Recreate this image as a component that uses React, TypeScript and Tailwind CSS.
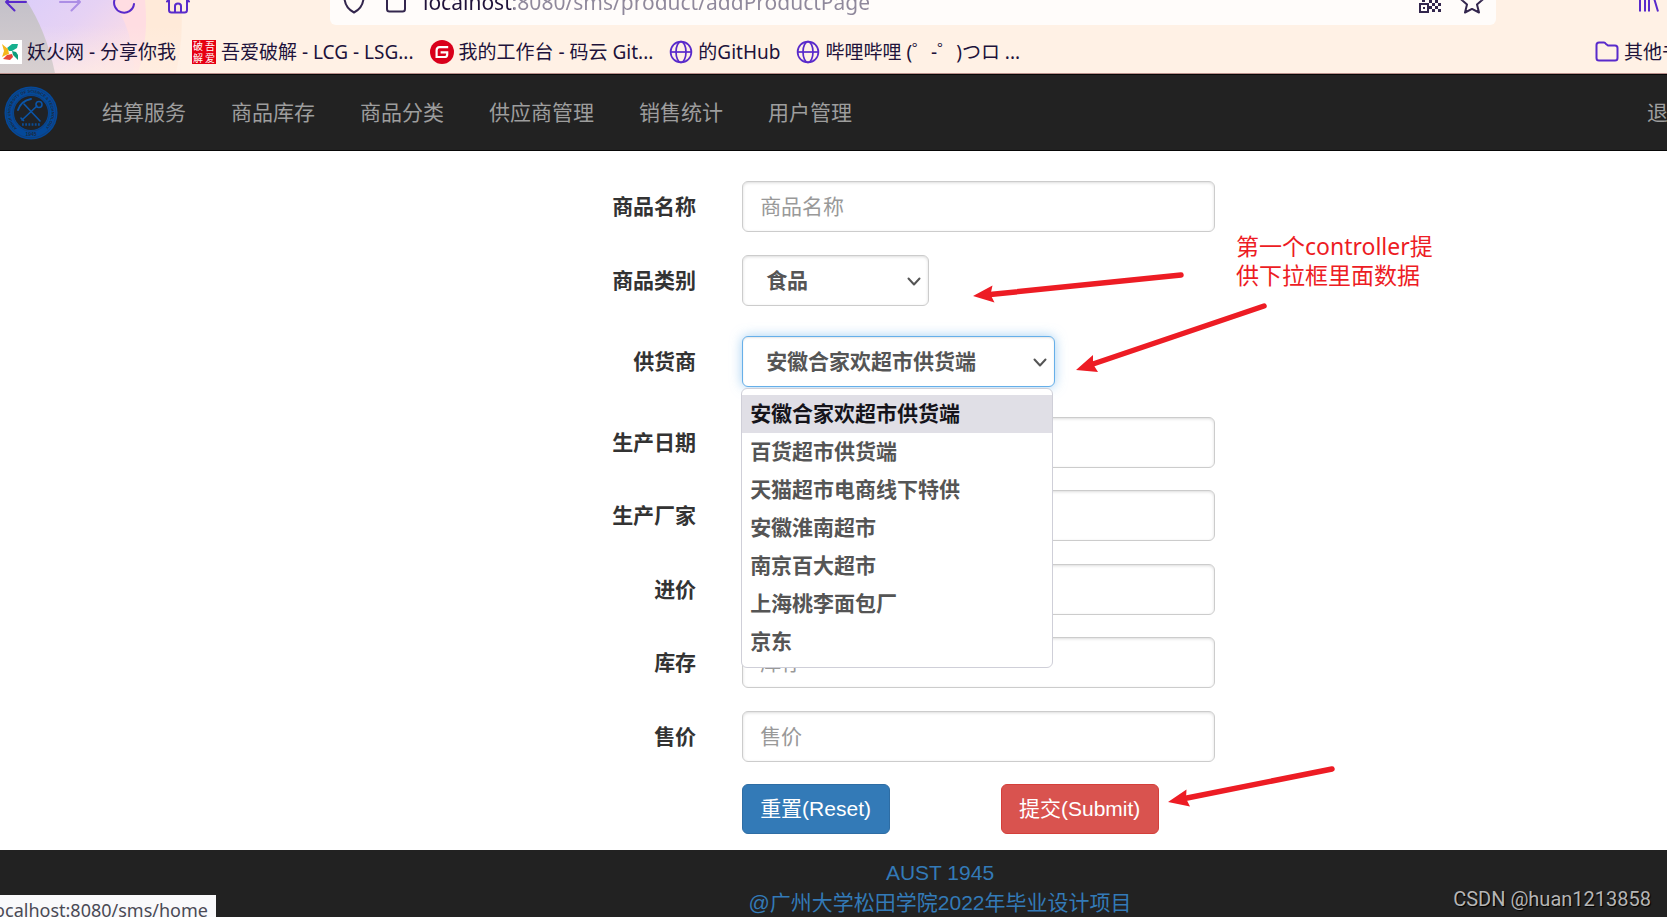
import { useState } from "react";

const navItems = ["结算服务", "商品库存", "商品分类", "供应商管理", "销售统计", "用户管理"];

const suppliers = [
  "安徽合家欢超市供货端",
  "百货超市供货端",
  "天猫超市电商线下特供",
  "安徽淮南超市",
  "南京百大超市",
  "上海桃李面包厂",
  "京东",
];

const uiFont = "font-['Noto_Sans','Noto_Sans_CJK_SC',sans-serif]";
const pageFont = "font-['Liberation_Sans','Noto_Sans_CJK_SC',sans-serif]";
const controlClass =
  "h-[51px] rounded-md border bg-white text-[21px] outline-none";

function ThemeBackground() {
  return (
    <svg className="absolute left-0 top-0 h-[73px] w-[220px]" viewBox="0 0 220 73" aria-hidden="true">
      <defs>
        <linearGradient id="lav" x1="0" y1="0" x2="1" y2="0.6">
          <stop offset="0" stopColor="#d9cdfb" />
          <stop offset="0.55" stopColor="#e6d2f4" />
          <stop offset="1" stopColor="#fbdde6" />
        </linearGradient>
        <linearGradient id="fade" x1="0" y1="0" x2="0" y2="1">
          <stop offset="0.35" stopColor="#fff0e5" stopOpacity="0" />
          <stop offset="1" stopColor="#fff0e5" stopOpacity="0.6" />
        </linearGradient>
        <linearGradient id="gray" x1="0" y1="0" x2="0" y2="1">
          <stop offset="0" stopColor="#c3c0c9" />
          <stop offset="1" stopColor="#d8d0d0" />
        </linearGradient>
      </defs>
      <path d="M0 0H181Q184 40 176 73H0Z" fill="#ffead9" />
      <path d="M0 0H145Q149 38 138 73H0Z" fill="#ffdde2" />
      <path d="M0 0H112Q134 30 134 73H0Z" fill="url(#lav)" />
      <path d="M0 0H181V73H0Z" fill="url(#fade)" />
      <path d="M0 0H26Q46 30 55 73H0Z" fill="url(#gray)" />
    </svg>
  );
}

function GlobeIcon() {
  return (
    <svg className="size-6 shrink-0" viewBox="0 0 24 24" fill="none" stroke="#592acb" strokeWidth="1.7">
      <circle cx="12" cy="12" r="10.4" />
      <ellipse cx="12" cy="12" rx="5" ry="10.4" />
      <path d="M1.6 12h20.8" />
    </svg>
  );
}

function PinwheelIcon() {
  return (
    <svg className="h-6 w-[22px] shrink-0" viewBox="0 0 22 24">
      <path d="M0 0h22v24H0z" fill="#fff" />
      <path d="M7 8L12 4h6l-1 4-5 3-3 0z" fill="#16b08e" />
      <path d="M12 11l4 1 2 3v5l-5-5z" fill="#0f9d7c" />
      <path d="M3 19l4-4 5-1 1 3-3 3z" fill="#e8473a" />
      <path d="M2 4l6 5 1 5-3 1-4 2 2-6z" fill="#f5b71c" />
    </svg>
  );
}

function SealIcon() {
  return (
    <span className="grid size-6 shrink-0 grid-cols-2 place-items-center bg-[#e60012] text-[10px] leading-[12px] text-white">
      <span>破</span>
      <span>吾</span>
      <span>解</span>
      <span>爱</span>
    </span>
  );
}

function GiteeIcon() {
  return (
    <svg className="size-6 shrink-0" viewBox="0 0 24 24" fill="none">
      <circle cx="12" cy="12" r="12" fill="#d9001b" />
      <path
        d="M18.2 7.2H9.6Q6.6 7.2 6.6 10.2V17H14.6Q17.2 17 17.2 14.4V12.3H10.6"
        stroke="#fff"
        strokeWidth="2.2"
      />
    </svg>
  );
}

function BookmarkLink({ icon, text }: { icon: React.ReactNode; text: string }) {
  return (
    <a href="#" className="flex items-center gap-[5px] whitespace-nowrap">
      {icon}
      <span>{text}</span>
    </a>
  );
}

function BrowserBar() {
  return (
    <header className={`relative h-[74px] overflow-hidden border-b border-[#b98f8b] bg-[#fff1e5] text-[#20123a] ${uiFont}`}>
      <ThemeBackground />
      {/* toolbar is cut off by the top of the window */}
      <div className="relative -mt-[21px] flex h-[46px] items-center">
        <div className="flex w-[330px] shrink-0 gap-[30px] pl-1">
          <button aria-label="后退">
            <svg className="size-6" viewBox="0 0 24 24" fill="none" stroke="#592acb" strokeWidth="2" strokeLinecap="round" strokeLinejoin="round">
              <path d="M22 12H2M10.500 3.500L2 12l8.500 8.500" />
            </svg>
          </button>
          <button aria-label="前进">
            <svg className="size-6" viewBox="0 0 24 24" fill="none" stroke="#ac8ee5" strokeWidth="2" strokeLinecap="round" strokeLinejoin="round">
              <path d="M2 12h20M13.500 3.500L22 12l-8.500 8.500" />
            </svg>
          </button>
          <button aria-label="刷新">
            <svg className="size-6" viewBox="0 0 24 24" fill="none" stroke="#592acb" strokeWidth="2" strokeLinecap="round">
              <path d="M3 8.500A10 10 0 1 0 22 14M20 2v6h-6" />
            </svg>
          </button>
          <button aria-label="主页">
            <svg className="size-6" viewBox="0 0 24 24" fill="none" stroke="#592acb" strokeWidth="2" strokeLinecap="round" strokeLinejoin="round">
              <path d="M1 11.500L12 1l11 10.500M3 10v10q0 2.500 2.500 2.500h13q2.500 0 2.500-2.500V10M9 22v-6q0-2.500 3-2.500t3 2.500v6" />
            </svg>
          </button>
        </div>
        <div className="flex h-full flex-1 items-center rounded-md bg-[#fffcfa] pl-3">
          <svg className="size-6" viewBox="0 0 24 24" fill="none" stroke="#33264d" strokeWidth="2" strokeLinejoin="round">
            <path d="M12 1l9.500 3.500Q22.500 17 12 22.500 1.500 17 2.500 4.500z" />
          </svg>
          <svg className="ml-[18px] size-6" viewBox="0 0 24 24" fill="none" stroke="#33264d" strokeWidth="2" strokeLinejoin="round">
            <path d="M5 1h9l7 7v11q0 2.500-2.500 2.500h-13Q3 21.500 3 19V3.500Q3 1 5.500 1z" />
          </svg>
          {/* the host name is darker than the rest of the address */}
          <input
            aria-label="地址栏"
            type="text"
            defaultValue="localhost:8080/sms/product/addProductPage"
            className="mr-4 ml-[15px] h-9 flex-1 bg-[linear-gradient(90deg,#20123a_91px,#8f889b_91px)] bg-clip-text text-[21px] text-transparent outline-none"
          />
          <svg className="size-6" viewBox="0 0 24 24" fill="#33264d">
            <path d="M1 13h10v10H1zM3 15v6h6v-6z" fillRule="evenodd" />
            <path d="M5 17h2v2H5zM4 9h3v3H4zM11 10h3v3h-3zM17 10h3v3h-3zM14 13h3v3h-3zM20 13h3v3h-3zM11 16h3v3h-3zM17 16h3v3h-3zM14 19h3v3h-3zM20 19h3v3h-3z" />
          </svg>
          <svg className="mr-3 ml-[18px] size-6" viewBox="0 0 24 24" fill="none" stroke="#33264d" strokeWidth="2" strokeLinejoin="round">
            <path d="M12 1.500l3 7 8 .8-6 5.200 2 8-7-3.600-7 3.600 2-8-6-5.200 8-.8z" />
          </svg>
        </div>
        <button aria-label="书库" className="mr-[6px] ml-[141px]">
          <svg className="size-6" viewBox="0 0 24 24" fill="none" stroke="#592acb" strokeWidth="2">
            <path d="M3 2v19.500M8 2v19.500M12 2v19.500M15.500 3L21 21.500" />
          </svg>
        </button>
      </div>
      <div className="relative flex h-[54px] items-center gap-4 text-[19px]">
        <BookmarkLink icon={<PinwheelIcon />} text="妖火网 - 分享你我" />
        <BookmarkLink icon={<SealIcon />} text="吾爱破解 - LCG - LSG..." />
        <BookmarkLink icon={<GiteeIcon />} text="我的工作台 - 码云 Git..." />
        <BookmarkLink icon={<GlobeIcon />} text="的GitHub" />
        <BookmarkLink icon={<GlobeIcon />} text="哔哩哔哩 (゜-゜)つロ ..." />
        <a href="#" className="-mr-[33px] ml-auto flex items-center gap-[5px] whitespace-nowrap">
          <svg className="size-6" viewBox="0 0 24 24" fill="none" stroke="#592acb" strokeWidth="2" strokeLinejoin="round">
            <path d="M4 2.500h5q1 0 2 1.500l2 1.500h7q2.500 0 2.500 2.500v10q0 2.500-2.500 2.500H4Q1.500 20.500 1.500 18V5Q1.500 2.500 4 2.500z" />
          </svg>
          其他书签
        </a>
      </div>
    </header>
  );
}

function SchoolLogo() {
  return (
    <svg className="size-[54px]" viewBox="0 0 54 54" fill="none" role="img" aria-label="AUST">
      <defs>
        <path id="ring" d="M13.200 42.300A20.500 20.500 0 1 1 40.800 42.300" />
      </defs>
      <circle cx="27" cy="27" r="26.500" fill="#04499a" />
      <circle cx="27" cy="27" r="24.800" stroke="#17396a" strokeWidth="0.6" />
      <circle cx="27" cy="27" r="17" fill="#202226" />
      <circle cx="27" cy="27" r="18.200" stroke="#17396a" strokeWidth="0.6" />
      <text className="font-['Liberation_Sans',sans-serif] text-[4px] font-bold" fill="#1c2a40">
        <textPath href="#ring" startOffset="0">
          ANHUI UNIVERSITY OF SCIENCE &amp; TECHNOLOGY
        </textPath>
      </text>
      <text x="27" y="50" textAnchor="middle" className="font-['Liberation_Sans',sans-serif] text-[5px] font-bold" fill="#1c2a40">
        1945
      </text>
      <g stroke="#0b55a8" strokeWidth="1.600" strokeLinecap="round">
        <path d="M20 18L36 35M33 20L18 34" />
        <path d="M14 24Q17 15 27 13" strokeWidth="1.900" />
        <circle cx="35" cy="18.500" r="3" />
        <path d="M17 32l2.500 2.500" />
      </g>
      <path d="M18 38.500h18" stroke="#0b4c94" strokeWidth="2.400" strokeDasharray="1.800 1.400" />
    </svg>
  );
}

function Navbar() {
  return (
    <nav className={`flex h-[77px] items-center overflow-hidden border-y border-[#080808] bg-[#222] text-[21px] whitespace-nowrap text-[#9d9d9d] ${pageFont}`}>
      <a href="#" className="ml-1 shrink-0">
        <SchoolLogo />
      </a>
      <div className="ml-[44px] flex gap-[45px]">
        {navItems.map((item) => (
          <a key={item} href="#">
            {item}
          </a>
        ))}
      </div>
      <a href="#" className="-mr-[22px] ml-auto">
        退出
      </a>
    </nav>
  );
}

function Chevron() {
  return (
    <svg
      className="pointer-events-none absolute top-5 right-2 h-3 w-[14px]"
      viewBox="0 0 14 12"
      fill="none"
      stroke="#555"
      strokeWidth="2"
      strokeLinecap="round"
      strokeLinejoin="round"
    >
      <path d="M1.500 3.500L7 9.500l5.500-6" />
    </svg>
  );
}

function FormRow({ id, label, children }: { id: string; label: string; children: React.ReactNode }) {
  return (
    <div className="flex items-center gap-[42px]">
      <div className="w-[42%] shrink-0 pr-1 text-right">
        <label htmlFor={id} className="font-bold text-[#333]">
          {label}
        </label>
      </div>
      <div className="flex w-full max-w-[473px]">{children}</div>
    </div>
  );
}

function TextField({ id, label }: { id: string; label: string }) {
  return (
    <FormRow id={id} label={label}>
      <input
        id={id}
        type="text"
        placeholder={label}
        className={`${controlClass} w-full border-[#ccc] px-[17px] text-[#555] shadow-[inset_0_1px_3px_rgba(0,0,0,0.14)] placeholder:text-[#999]`}
      />
    </FormRow>
  );
}

function Annotations() {
  return (
    <>
      <svg className="pointer-events-none absolute top-[260px] left-[960px] h-[560px] w-[400px]" viewBox="960 260 400 560" aria-hidden="true">
        <g stroke="#ed1c24" strokeWidth="5.500" strokeLinecap="round">
          <path d="M990 294.500L1181 275" />
          <path d="M1093 364L1264 306" />
          <path d="M1187 798L1332 769" />
        </g>
        <g fill="#ed1c24">
          <path d="M973 296l19.500-10.500-2 9 4 8z" />
          <path d="M1076 370l17-15 0 9 5 8z" />
          <path d="M1168 802l18.500-12.500-.5 9 4 8z" />
        </g>
      </svg>
      <p className={`absolute top-[232px] left-[1236px] text-[23px] leading-[29px] whitespace-nowrap text-[#ed1c24] ${uiFont}`}>
        第一个controller提
        <br />
        供下拉框里面数据
      </p>
    </>
  );
}

export default function App() {
  const [category, setCategory] = useState("食品");
  const [supplier, setSupplier] = useState(suppliers[0]);

  return (
    <div className="relative flex min-h-screen flex-col overflow-hidden bg-white">
      <BrowserBar />
      <Navbar />
      <main className={`pt-[30px] pb-4 text-[21px] leading-[30px] ${pageFont}`}>
        <form onSubmit={(e) => e.preventDefault()} className="flex flex-col gap-[30px]">
          <div className="flex flex-col gap-[23px]">
            <TextField id="name" label="商品名称" />
            <FormRow id="category" label="商品类别">
              <div className="relative w-[187px]">
                <select
                  id="category"
                  value={category}
                  onChange={(e) => setCategory(e.target.value)}
                  className={`${controlClass} w-full appearance-none border-[#ccc] pl-[23px] font-bold text-[#555] shadow-[inset_0_1px_3px_rgba(0,0,0,0.14)]`}
                >
                  <option>食品</option>
                  <option>日用品</option>
                </select>
                <Chevron />
              </div>
            </FormRow>
          </div>
          <FormRow id="supplier" label="供货商">
            <div className="relative w-[313px]">
              <select
                id="supplier"
                value={supplier}
                onChange={(e) => setSupplier(e.target.value)}
                className={`${controlClass} w-full appearance-none border-[#66afe9] pl-[23px] font-bold text-[#555] shadow-[inset_0_1px_2px_rgba(0,0,0,0.1),0_0_12px_rgba(102,175,233,0.6)]`}
              >
                {suppliers.map((s) => (
                  <option key={s}>{s}</option>
                ))}
              </select>
              <Chevron />
              <ul
                role="listbox"
                aria-label="供货商"
                className="absolute top-full right-[2px] -left-px z-10 mt-px rounded-md border border-[#cfcfd8] bg-white py-[6px] font-bold text-[#555]"
              >
                {suppliers.map((s) => (
                  <li
                    key={s}
                    role="option"
                    aria-selected={s === supplier}
                    onClick={() => setSupplier(s)}
                    className={`h-[38px] pl-2 leading-[38px] ${s === supplier ? "bg-[#e0dfe6] text-[#15141a]" : ""}`}
                  >
                    {s}
                  </li>
                ))}
              </ul>
            </div>
          </FormRow>
          <div className="flex flex-col gap-[23px]">
            <div className="flex flex-col gap-[22px]">
              <TextField id="produceDate" label="生产日期" />
              <TextField id="factory" label="生产厂家" />
            </div>
            <div className="flex flex-col gap-[22px]">
              <TextField id="costPrice" label="进价" />
              <TextField id="stock" label="库存" />
            </div>
            <div className="flex flex-col gap-[22px]">
              <TextField id="salePrice" label="售价" />
              <div className="flex gap-[42px]">
                <div className="w-[42%] shrink-0" />
                <div className="flex gap-[111px] whitespace-nowrap text-white">
                  <button type="reset" className="h-[50px] rounded-md border border-[#2e6da4] bg-[#337ab7] pr-[18px] pl-[17px]">
                    重置(Reset)
                  </button>
                  <button type="submit" className="h-[50px] rounded-md border border-[#d43f3a] bg-[#d9534f] pr-[18px] pl-[17px]">
                    提交(Submit)
                  </button>
                </div>
              </div>
            </div>
          </div>
        </form>
      </main>
      <footer className={`h-[67px] overflow-hidden bg-[#222] pt-2 pl-[213px] text-center text-[21px] leading-[30px] text-[#337ab7] ${pageFont}`}>
        <p>AUST 1945</p>
        <p>
          <a href="#">@广州大学松田学院2022年毕业设计项目</a>
        </p>
      </footer>
      <Annotations />
      <div className={`absolute bottom-0 left-0 flex h-[22px] w-[216px] justify-end overflow-hidden bg-[#f9f9fb] pr-2 text-[18px] leading-[31px] text-[#4a4a55] ${uiFont}`}>
        localhost:8080/sms/home
      </div>
      <span className="absolute right-4 bottom-1 font-['Roboto',sans-serif] text-[20px] leading-7 text-[#b5b5b5] [text-shadow:1px_1px_1px_#000]">
        CSDN @huan1213858
      </span>
    </div>
  );
}
